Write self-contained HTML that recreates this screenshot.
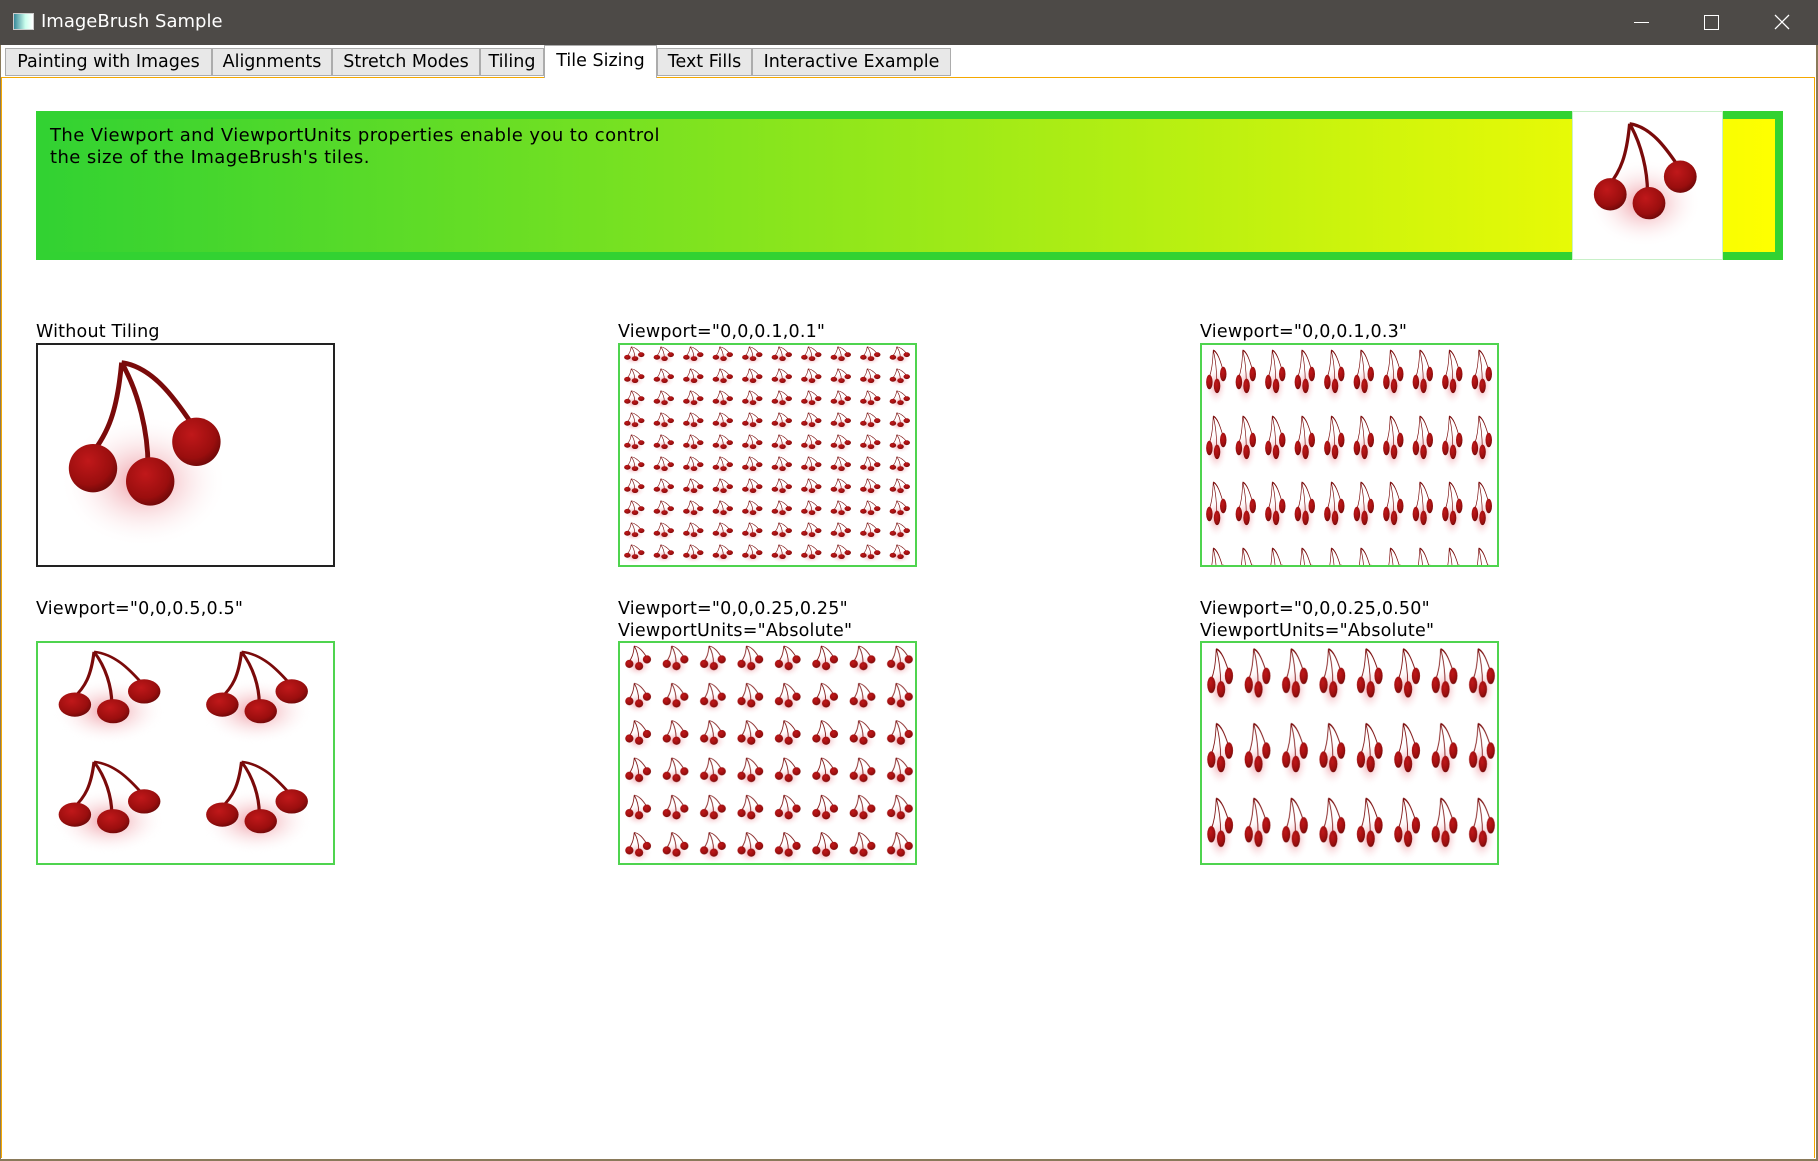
<!DOCTYPE html>
<html><head><style>
body{margin:0;width:1818px;height:1161px;overflow:hidden;background:#fff;font-family:"DejaVu Sans","Liberation Sans",sans-serif;position:relative}
.title{position:absolute;left:0;top:0;width:1818px;height:45px;background:#4d4a47;color:#fff;font-size:18px}
.tab{position:absolute;top:48px;height:28px;background:#e8e8e8;border:1px solid #acacac;box-sizing:border-box;font-size:17.5px;line-height:27px;text-align:center;color:#000}
.sel{top:45px;height:33px;background:#fff;border-bottom:none;line-height:30px;z-index:2}
.lbl{position:absolute;font-size:17.5px;line-height:22px;color:#000;letter-spacing:0.2px}
.box{position:absolute;width:299px;height:224px;box-sizing:border-box;border:2px solid #4fd44f}
.box svg{display:block}
</style></head><body>
<svg width="0" height="0" style="position:absolute">
<defs>
<radialGradient id="cg" cx="0.4" cy="0.35" r="0.7"><stop offset="0" stop-color="#c0181a"/><stop offset="0.7" stop-color="#9a0e0e"/><stop offset="1" stop-color="#6a0808"/></radialGradient>
<radialGradient id="gl" cx="0.5" cy="0.5" r="0.5"><stop offset="0" stop-color="#e04050" stop-opacity="0.55"/><stop offset="1" stop-color="#ffffff" stop-opacity="0"/></radialGradient>
<symbol id="ch" viewBox="0 0 100 100" preserveAspectRatio="none">
<ellipse cx="48" cy="62" rx="38" ry="30" fill="url(#gl)"/>
<path d="M38 8 C36 30 32 40 24 50 M38 8 C46 22 50 40 50 55 M38 8 C52 10 62 24 70 36" stroke="#7a0a0a" stroke-width="2.2" fill="none"/>
<circle cx="25" cy="56" r="11" fill="url(#cg)"/>
<circle cx="51" cy="62" r="11" fill="url(#cg)"/>
<circle cx="72" cy="44" r="11" fill="url(#cg)"/>
</symbol>
</defs></svg>
<div class="title">
<div style="position:absolute;left:13px;top:13px;width:19px;height:15px;background:linear-gradient(90deg,#3a8a9a,#cfe 60%,#fff);border:1px solid #ccc"></div>
<div style="position:absolute;left:41px;top:11px">ImageBrush Sample</div>
<div style="position:absolute;left:1634px;top:22px;width:15px;height:1px;background:#fff"></div>
<div style="position:absolute;left:1704px;top:15px;width:13px;height:13px;border:1px solid #fff"></div>
<svg style="position:absolute;left:1774px;top:14px" width="16" height="16"><path d="M1 1L15 15M15 1L1 15" stroke="#fff" stroke-width="1.3"/></svg>
</div>
<div style="position:absolute;left:0;top:45px;width:1px;height:1116px;background:#8a7a5a"></div>
<div style="position:absolute;right:0;top:45px;width:2px;height:1116px;background:#8a7a5a"></div>
<div style="position:absolute;left:0;bottom:0;width:1818px;height:2px;background:#8a7a5a"></div>
<div style="position:absolute;left:1px;top:77px;width:1814px;height:1081px;border-top:1px solid #f5a800;border-left:1px solid #f5a800;border-right:1px solid #f5a800;box-sizing:border-box"></div>
<div class="tab" style="left:5px;width:207px">Painting with Images</div>
<div class="tab" style="left:212px;width:120px">Alignments</div>
<div class="tab" style="left:332px;width:148px">Stretch Modes</div>
<div class="tab" style="left:480px;width:64px">Tiling</div>
<div class="tab sel" style="left:544px;width:113px">Tile Sizing</div>
<div class="tab" style="left:657px;width:95px">Text Fills</div>
<div class="tab" style="left:752px;width:199px">Interactive Example</div>

<div style="position:absolute;left:36px;top:111px;width:1747px;height:149px;background:#32d232"></div>
<div style="position:absolute;left:44px;top:119px;width:1731px;height:133px;background:linear-gradient(90deg,#32d232,#ffff00)"></div>
<div style="position:absolute;left:1572px;top:111px;width:151px;height:149px;background:#fff;border:1px solid #c8f0c8;box-sizing:border-box"><svg width="149" height="147"><use href="#ch" width="149" height="147"/></svg></div>
<div class="lbl" style="left:50px;top:125px;font-size:18px;letter-spacing:0.4px">The Viewport and ViewportUnits properties enable you to control<br>the size of the ImageBrush's tiles.</div>

<div class="lbl" style="left:36px;top:321px">Without Tiling</div>
<div class="box" style="left:36px;top:343px;border-color:#222"><svg width="295" height="220"><use href="#ch" x="0" y="0" width="220" height="220"/></svg></div>

<div class="lbl" style="left:618px;top:321px">Viewport="0,0,0.1,0.1"</div>
<div class="box" style="left:618px;top:343px"><svg width="295" height="220"><defs><pattern id="p1" width="29.5" height="22" patternUnits="userSpaceOnUse"><use href="#ch" width="29.5" height="22"/></pattern></defs><rect width="295" height="220" fill="url(#p1)"/></svg></div>

<div class="lbl" style="left:1200px;top:321px">Viewport="0,0,0.1,0.3"</div>
<div class="box" style="left:1200px;top:343px"><svg width="295" height="220"><defs><pattern id="p2" width="29.5" height="66" patternUnits="userSpaceOnUse"><use href="#ch" width="29.5" height="66"/></pattern></defs><rect width="295" height="220" fill="url(#p2)"/></svg></div>

<div class="lbl" style="left:36px;top:598px">Viewport="0,0,0.5,0.5"</div>
<div class="box" style="left:36px;top:641px"><svg width="295" height="220"><defs><pattern id="p3" width="147.5" height="110" patternUnits="userSpaceOnUse"><use href="#ch" width="147.5" height="110"/></pattern></defs><rect width="295" height="220" fill="url(#p3)"/></svg></div>

<div class="lbl" style="left:618px;top:598px">Viewport="0,0,0.25,0.25"<br>ViewportUnits="Absolute"</div>
<div class="box" style="left:618px;top:641px"><svg width="295" height="220"><defs><pattern id="p4" width="37.4" height="37.3" patternUnits="userSpaceOnUse"><use href="#ch" width="37.4" height="37.3"/></pattern></defs><rect width="295" height="220" fill="url(#p4)"/></svg></div>

<div class="lbl" style="left:1200px;top:598px">Viewport="0,0,0.25,0.50"<br>ViewportUnits="Absolute"</div>
<div class="box" style="left:1200px;top:641px"><svg width="295" height="220"><defs><pattern id="p5" width="37.4" height="74.7" patternUnits="userSpaceOnUse"><use href="#ch" width="37.4" height="74.7"/></pattern></defs><rect width="295" height="220" fill="url(#p5)"/></svg></div>
</body></html>
